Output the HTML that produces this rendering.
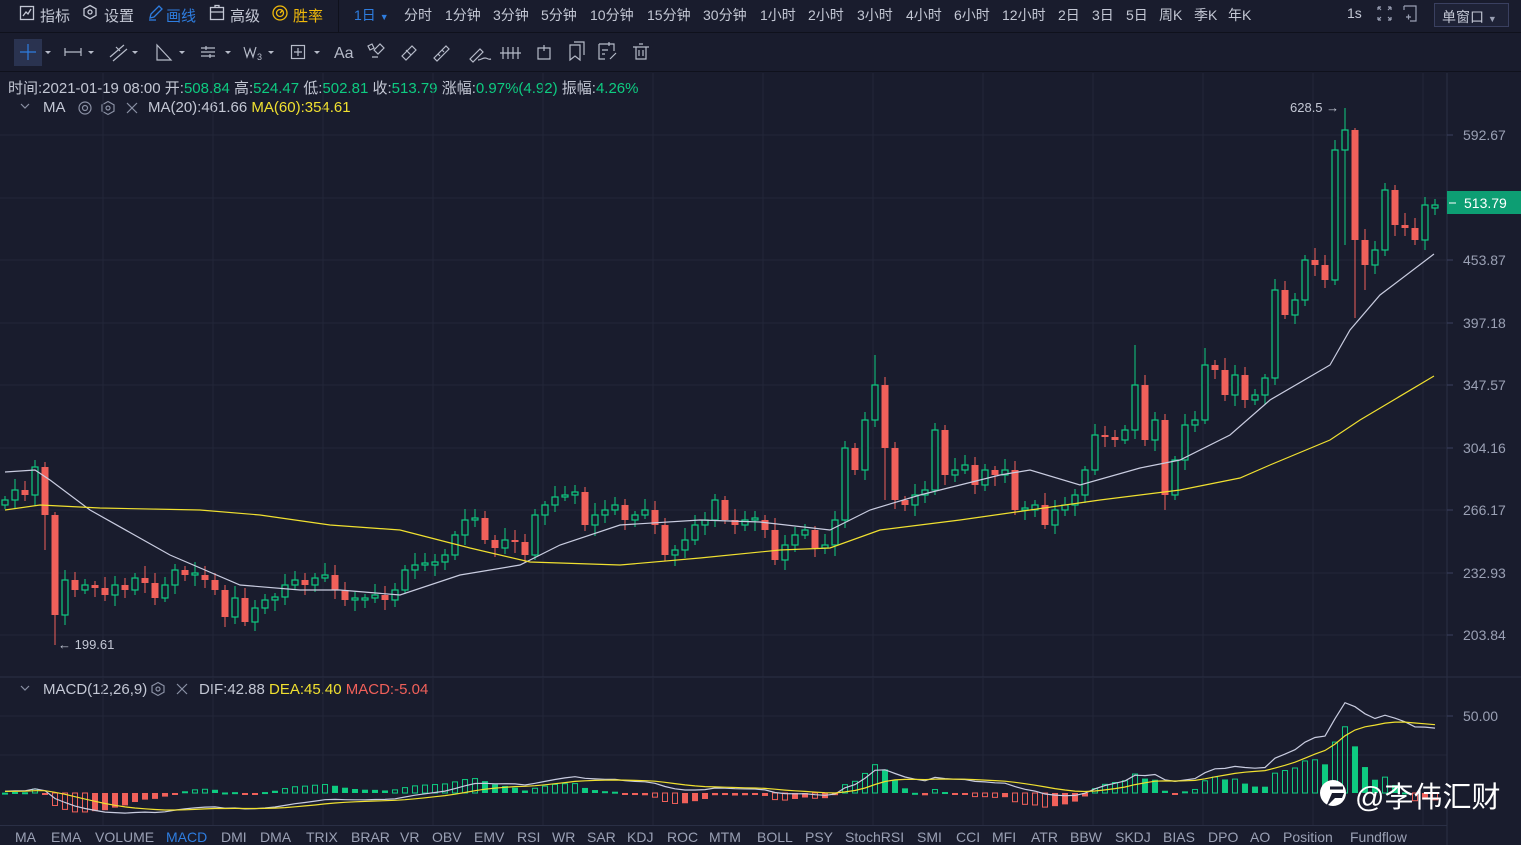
<!DOCTYPE html>
<html><head><meta charset="utf-8">
<style>
*{margin:0;padding:0;box-sizing:border-box}
body{width:1521px;height:845px;background:#191c2d;overflow:hidden;position:relative;font-family:"Liberation Sans","Noto Sans CJK SC",sans-serif;color:#c3c7d4;font-size:14px}
.a{position:absolute;white-space:nowrap}
.top{position:absolute;left:0;top:0;width:1521px;height:33px;border-bottom:1px solid #0f111c}
.tb{position:absolute;left:0;top:33px;width:1521px;height:39px;border-bottom:1px solid #0f111c}
.tf{top:5px;font-size:14px;color:#c3c7d4}
.bt{top:829px;font-size:14px;color:#9aa0b4}
.g{color:#0ecb81}.y{color:#f0e030}.r{color:#f0605a}
svg{position:absolute;left:0;top:0}
</style></head><body>
<div class="top"></div>
<div class="tb"></div>
<div class="a" style="left:338px;top:0;width:1px;height:32px;background:#0f111c"></div>
<svg width="340" height="32" style="left:0;top:0">
<g fill="none" stroke="#c3c7d4" stroke-width="1.3">
<rect x="20.5" y="6.5" width="13" height="13"/><path d="M23 16l3-4 2 2 3-5"/>
<path d="M90 5.5l6 3.3v6.6l-6 3.3-6-3.3V8.8z"/><circle cx="90" cy="12" r="2"/>
<path d="M150 18l1-4 8-8 3 3-8 8z" stroke="#2e7de0"/><path d="M149 20h7" stroke="#2e7de0"/>
<rect x="210.5" y="7.5" width="13" height="12"/><path d="M210 12h14M215 7.5v-2h4v2"/>
<circle cx="280" cy="13" r="7" stroke="#f0b90b"/><circle cx="280" cy="13" r="3.5" stroke="#f0b90b"/><path d="M280 13l3-3" stroke="#f0b90b"/>
</g></svg>
<div class="a" style="left:40px;top:5px;font-size:15px">指标</div>
<div class="a" style="left:104px;top:5px;font-size:15px">设置</div>
<div class="a" style="left:166px;top:5px;color:#2e7de0;font-size:15px">画线</div>
<div class="a" style="left:230px;top:5px;font-size:15px">高级</div>
<div class="a" style="left:293px;top:5px;color:#f0b90b;font-size:15px">胜率</div>
<div class="a tf" style="left:354px;color:#2e7de0">1日 <span style="font-size:9px">▼</span></div>
<div class="a tf" style="left:404px">分时</div>
<div class="a tf" style="left:445px">1分钟</div>
<div class="a tf" style="left:493px">3分钟</div>
<div class="a tf" style="left:541px">5分钟</div>
<div class="a tf" style="left:590px">10分钟</div>
<div class="a tf" style="left:647px">15分钟</div>
<div class="a tf" style="left:703px">30分钟</div>
<div class="a tf" style="left:760px">1小时</div>
<div class="a tf" style="left:808px">2小时</div>
<div class="a tf" style="left:857px">3小时</div>
<div class="a tf" style="left:906px">4小时</div>
<div class="a tf" style="left:954px">6小时</div>
<div class="a tf" style="left:1002px">12小时</div>
<div class="a tf" style="left:1058px">2日</div>
<div class="a tf" style="left:1092px">3日</div>
<div class="a tf" style="left:1126px">5日</div>
<div class="a tf" style="left:1159px">周K</div>
<div class="a tf" style="left:1194px">季K</div>
<div class="a tf" style="left:1228px">年K</div>
<div class="a tf" style="left:1347px">1s</div>
<svg width="120" height="32" style="left:1370px;top:0"><g fill="none" stroke="#9aa0b4" stroke-width="1.2">
<path d="M8 7l3 3M8 7v3M8 7h3M21 7l-3 3M21 7v3M21 7h-3M8 20l3-3M8 20v-3M8 20h3M21 20l-3-3M21 20v-3M21 20h-3"/>
<path d="M34 6h12v15h-6M34 6v4M36 17h5M38.5 14.5v5"/></g></svg>
<div class="a" style="left:1434px;top:3px;width:75px;height:24px;border:1px solid #3a4060;background:#1e2236;font-size:14px;padding:3px 0 0 7px">单窗口 <span style="font-size:9px;color:#9aa0b4">▼</span></div>
<div class="a" style="left:14px;top:39px;width:28px;height:27px;background:#2a3350"></div>
<svg width="660" height="40" style="left:0;top:33px"><g fill="none" stroke="#b6bbc9" stroke-width="1.2">
<path d="M28 11v16M20 19h16" stroke="#2e7de0"/>
<path d="M65 19h16M65 15v8M81 15v8"/>
<path d="M110 24l14-12M113 28l14-12M116 14l4 4"/>
<path d="M157 12v15h14z"/>
<path d="M201 15h14M201 19h14M201 23h14M206 13v4M210 21v4"/>
<path d="M244 14l3 10 3-8 3 8 3-10"/>
<rect x="291.5" y="12.5" width="13" height="13"/><path d="M298 15v8M294 19h8"/>
<path d="M368 13l4-2 2 4-4 2zM374 17l6-6 4 4-6 6zM372 24h6"/>
<path d="M402 23l10-10 4 4-10 10zM406 17l5 5"/>
<path d="M434 25l12-12 3 3-12 12zM438 21l2 2M442 17l2 2"/>
<path d="M470 26l10-10 3 3-10 10zM478 27c3 0 4-2 7-2s3 2 6 1"/>
<path d="M503 14v12M508 14v12M513 14v12M518 14v12M500 20h21"/>
<path d="M538 15h12v11h-12zM544 12v6"/>
<path d="M570 12h10v15l-5-4-5 4zM574 9h10v13"/>
<path d="M599 11h15v7M599 11v15h6M609 9v4M602 17h6M602 21h3M610 26l6-6"/>
<path d="M633 14h16M636 14v12h10V14M639 11h4M639 17v6M643 17v6"/>
</g>
<g fill="#b6bbc9"><path d="M45 18h6l-3 3z M88 18h6l-3 3z M132 18h6l-3 3z M179 18h6l-3 3z M225 18h6l-3 3z M268 18h6l-3 3z M314 18h6l-3 3z"/></g>
<text x="334" y="25" fill="#b6bbc9" font-size="16" font-family="Liberation Sans">Aa</text>
<text x="257" y="27" fill="#b6bbc9" font-size="9" font-family="Liberation Sans">3</text>
</svg>
<div class="a" style="left:8px;top:77px;font-size:15px">时间:2021-01-19 08:00 开:<span class="g">508.84</span> 高:<span class="g">524.47</span> 低:<span class="g">502.81</span> 收:<span class="g">513.79</span> 涨幅:<span class="g">0.97%(4.92)</span> 振幅:<span class="g">4.26%</span></div>
<div class="a" style="left:43px;top:99px;font-size:15px">MA</div>
<div class="a" style="left:148px;top:99px;font-size:15px">MA(20):461.66 <span class="y">MA(60):354.61</span></div>
<div class="a" style="left:43px;top:681px;font-size:15px">MACD(12,26,9)</div>
<div class="a" style="left:199px;top:681px;font-size:15px">DIF:42.88 <span class="y">DEA:45.40</span> <span class="r">MACD:-5.04</span></div>
<svg width="200" height="700" style="left:0;top:0"><g fill="none" stroke="#8a90a4" stroke-width="1.2">
<path d="M21 104l4 4 4-4M21 686l4 4 4-4"/>
<circle cx="85" cy="108" r="6"/><circle cx="85" cy="108" r="2.5"/>
<path d="M108 101.5l6 3.3v6.4l-6 3.3-6-3.3v-6.4z"/><circle cx="108" cy="108" r="2"/>
<path d="M127 103l10 10M137 103l-10 10"/>
<path d="M158 682.5l6 3.3v6.4l-6 3.3-6-3.3v-6.4z"/><circle cx="158" cy="689" r="2"/>
<path d="M177 684l10 10M187 684l-10 10"/>
</g></svg>
<svg id="c" width="1521" height="845"></svg>
<div class="a" style="left:0;top:825px;width:1447px;height:1px;background:#2a2f45"></div>
<div class="a bt" style="left:15px">MA</div><div class="a bt" style="left:51px">EMA</div><div class="a bt" style="left:95px">VOLUME</div><div class="a bt" style="left:166px;color:#2e7de0">MACD</div><div class="a bt" style="left:221px">DMI</div><div class="a bt" style="left:260px">DMA</div><div class="a bt" style="left:306px">TRIX</div><div class="a bt" style="left:351px">BRAR</div><div class="a bt" style="left:400px">VR</div><div class="a bt" style="left:432px">OBV</div><div class="a bt" style="left:474px">EMV</div><div class="a bt" style="left:517px">RSI</div><div class="a bt" style="left:552px">WR</div><div class="a bt" style="left:587px">SAR</div><div class="a bt" style="left:627px">KDJ</div><div class="a bt" style="left:667px">ROC</div><div class="a bt" style="left:709px">MTM</div><div class="a bt" style="left:757px">BOLL</div><div class="a bt" style="left:805px">PSY</div><div class="a bt" style="left:845px">StochRSI</div><div class="a bt" style="left:917px">SMI</div><div class="a bt" style="left:956px">CCI</div><div class="a bt" style="left:992px">MFI</div><div class="a bt" style="left:1031px">ATR</div><div class="a bt" style="left:1070px">BBW</div><div class="a bt" style="left:1115px">SKDJ</div><div class="a bt" style="left:1163px">BIAS</div><div class="a bt" style="left:1208px">DPO</div><div class="a bt" style="left:1250px">AO</div><div class="a bt" style="left:1283px">Position</div><div class="a bt" style="left:1350px">Fundflow</div>
<svg width="36" height="36" style="left:1316px;top:776px"><circle cx="17" cy="17" r="13" fill="#fff"/><path d="M10 31l6-14h12l-2 5h-7z" fill="#191c2d"/><path d="M14 12h13" stroke="#191c2d" stroke-width="3"/></svg>
<div class="a" style="left:1355px;top:774px;font-size:29px;color:#fff">@李伟汇财</div>
<script>
(function(){
var S=document.getElementById('c'),h='';
function L(x1,y1,x2,y2,c,w){h+='<line x1="'+x1+'" y1="'+y1+'" x2="'+x2+'" y2="'+y2+'" stroke="'+c+'" stroke-width="'+(w||1)+'"/>';}
[135,198,260,323,385,448,510,573,635].forEach(function(y){L(0,y,1447,y,'#222639');});
[716,755].forEach(function(y){L(0,y,1447,y,'#222639');});
for(var gx=103;gx<1447;gx+=110){L(gx,73,gx,677,'#222639');L(gx,678,gx,825,'#222639');}
L(1447,73,1447,845,'#2a2f45');L(0,677,1521,677,'#2a2f45');
var ax=[[135,'592.67'],[260,'453.87'],[323,'397.18'],[385,'347.57'],[448,'304.16'],[510,'266.17'],[573,'232.93'],[635,'203.84'],[716,'50.00']];
ax.forEach(function(a){L(1447,a[0],1453,a[0],'#3a4060');h+='<text x="1463" y="'+(a[0]+5)+'" fill="#9aa0b4" font-size="14" font-family="Liberation Sans">'+a[1]+'</text>';});
var C=[500,490,495,467,515,615,580,590,585,588,595,585,590,578,583,598,585,570,575,575,580,590,617,598,622,608,600,597,585,580,585,578,575,590,600,600,598,595,600,590,570,565,565,562,555,535,520,518,540,548,540,542,555,515,505,497,495,492,525,515,510,505,520,515,510,525,555,550,540,525,520,500,520,525,520,520,530,560,545,535,530,548,545,520,448,470,420,385,448,500,505,495,490,430,475,470,465,485,470,475,470,510,510,505,525,510,505,495,470,435,437,440,430,385,440,420,495,460,425,420,365,370,395,375,400,395,378,290,315,300,260,265,280,150,130,240,265,250,190,225,228,240,205,205];
var HI={4:462,5:512,133:140,134:108,135:128,87:355,113:345,120:348,86:412};
var LO={5:645,4:550,135:318,116:510,88:500,134:245,136:290};
var G='#0ecb81',R='#f0605a';
for(var i=0;i<C.length;i++){
 var x=5+i*10,o=i?C[i-1]:505,c=C[i];if(i==C.length-1)o=208;
 if(Math.abs(o-c)<2){c=o-2;}
 var tp=Math.min(o,c),bm=Math.max(o,c);
 var hi=HI[i]||tp-4-(i*7%9),lo=LO[i]||bm+4+(i*5%8);
 var up=c<o,col=up?G:R;
 L(x,hi,x,tp,col);L(x,bm,x,lo,col);
 if(up)h+='<rect x="'+(x-3)+'" y="'+tp+'" width="6" height="'+(bm-tp)+'" fill="#191c2d" stroke="'+col+'" stroke-width="1.2"/>';
 else h+='<rect x="'+(x-3.5)+'" y="'+tp+'" width="7" height="'+(bm-tp)+'" fill="'+col+'"/>';
}
function P(pts,col){h+='<polyline fill="none" stroke="'+col+'" stroke-width="1.2" points="'+pts.map(function(p){return p.join(',')}).join(' ')+'"/>';}
P([[5,472],[35,470],[50,480],[90,510],[170,555],[240,585],[300,590],[340,590],[400,595],[460,575],[520,565],[560,545],[620,525],[700,520],[760,522],[830,530],[870,510],[920,495],[1000,475],[1030,470],[1080,485],[1140,468],[1180,460],[1230,435],[1270,400],[1330,365],[1350,330],[1380,295],[1434,254]],'#c9cce0');
P([[5,510],[40,505],[100,508],[200,510],[260,515],[330,525],[400,530],[470,548],[530,562],[620,565],[700,558],[780,550],[830,548],[880,530],[960,520],[1030,510],[1100,500],[1180,490],[1240,478],[1270,465],[1330,440],[1360,420],[1434,376]],'#f0e030');
h+='<text x="1290" y="112" fill="#c3c7d4" font-size="13" font-family="Liberation Sans">628.5 →</text>';
h+='<text x="58" y="649" fill="#c3c7d4" font-size="13" font-family="Liberation Sans">← 199.61</text>';
h+='<rect x="1447" y="191" width="74" height="23" fill="#0d9e73"/>';
L(1449,203,1456,203,'#fff');
h+='<text x="1464" y="208" fill="#fff" font-size="14" font-family="Liberation Sans">513.79</text>';
function pr(y){return 592.67*Math.pow(1.1428,-(y-135)/62.5);}
var e12,e26,dea,dif=[],dv=[],hs=[];
for(var i=0;i<C.length;i++){var p=pr(C[i]);if(!i){e12=p*1.005;e26=p;dea=1;}
 e12=e12*11/13+p*2/13;e26=e26*25/27+p*2/27;var d=e12-e26;dea=dea*0.8+d*0.2;dif.push(d);dv.push(dea);hs.push(2*(d-dea));}
var z=793,k=1.54;
for(var i=0;i<C.length;i++){var x=5+i*10,v=hs[i]*k,col=v>=0?G:R,inc=Math.abs(hs[i])>Math.abs(hs[i-1]||0);
 var t=Math.min(z,z-v),hh=Math.max(2,Math.abs(v));
 if(inc&&hh>3)h+='<rect x="'+(x-2.5)+'" y="'+t+'" width="5" height="'+hh+'" fill="none" stroke="'+col+'" stroke-width="1"/>';
 else h+='<rect x="'+(x-3)+'" y="'+t+'" width="6" height="'+hh+'" fill="'+col+'"/>';}
P(dif.map(function(d,i){return[5+i*10,(z-d*k).toFixed(1)]}),'#c9cce0');
P(dv.map(function(d,i){return[5+i*10,(z-d*k).toFixed(1)]}),'#f0e030');
S.innerHTML=h;
})();
</script>
</body></html>
